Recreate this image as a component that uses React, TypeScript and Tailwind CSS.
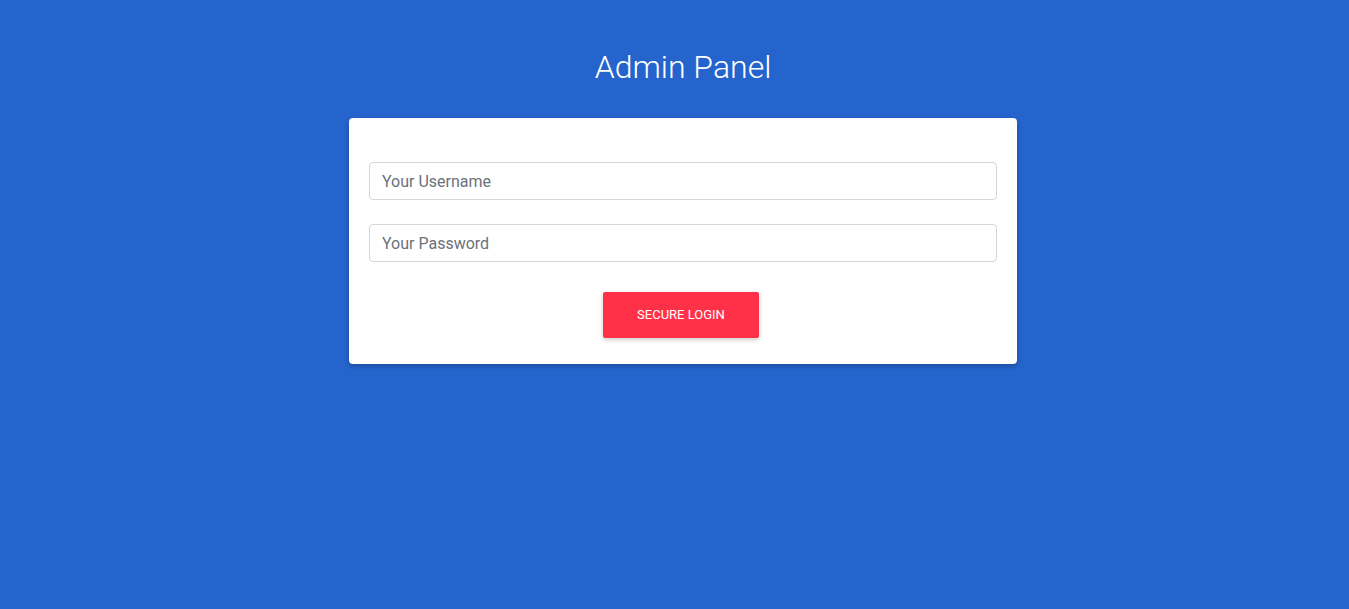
export default function App() {
  return (
    <div
      className="min-h-[609px] w-full bg-[#2464cc] flex flex-col items-center pl-[17px]"
      style={{ fontFamily: "Roboto, 'Liberation Sans', sans-serif" }}
    >
      <h1 className="mt-[46px] text-[32px] leading-[42px] font-light text-white">
        Admin Panel
      </h1>
      <div className="mt-[30px] w-[668px] rounded-[4px] bg-white px-5 pt-[44px] pb-[26px] shadow-[0_2px_5px_rgba(0,0,0,0.25)]">
        <input
          type="text"
          placeholder="Your Username"
          className="block h-[38px] w-full rounded-[4px] border border-[#d6d6d6] px-3 text-[16px] text-[#495057] placeholder:text-[#6c717a] outline-none"
        />
        <input
          type="password"
          placeholder="Your Password"
          className="mt-6 block h-[38px] w-full rounded-[4px] border border-[#d6d6d6] px-3 text-[16px] text-[#495057] placeholder:text-[#6c717a] outline-none"
        />
        <div className="mt-[30px] flex justify-center pr-1">
          <button className="h-[46px] w-[156px] rounded-[2px] bg-[#ff3148] text-[13px] font-normal uppercase text-white shadow-[0_2px_5px_rgba(0,0,0,0.2)]">
            Secure Login
          </button>
        </div>
      </div>
    </div>
  );
}
